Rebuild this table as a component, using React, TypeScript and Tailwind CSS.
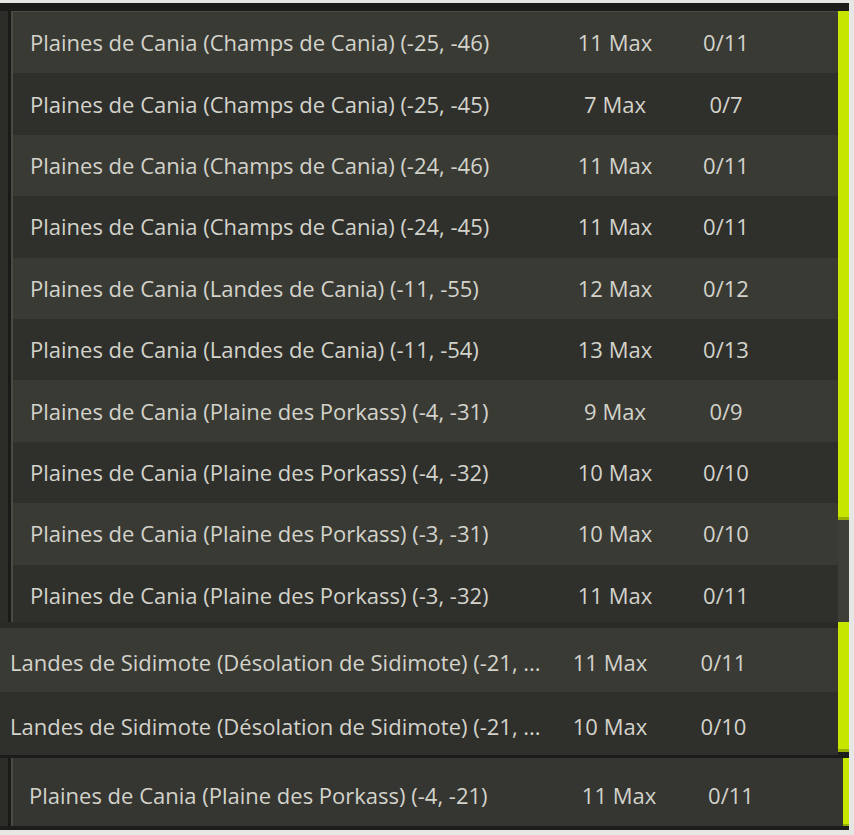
type Slot = { name: string; max: number };

const MAIN_ROWS: Slot[] = [
  { name: "Plaines de Cania (Champs de Cania) (-25, -46)", max: 11 },
  { name: "Plaines de Cania (Champs de Cania) (-25, -45)", max: 7 },
  { name: "Plaines de Cania (Champs de Cania) (-24, -46)", max: 11 },
  { name: "Plaines de Cania (Champs de Cania) (-24, -45)", max: 11 },
  { name: "Plaines de Cania (Landes de Cania) (-11, -55)", max: 12 },
  { name: "Plaines de Cania (Landes de Cania) (-11, -54)", max: 13 },
  { name: "Plaines de Cania (Plaine des Porkass) (-4, -31)", max: 9 },
  { name: "Plaines de Cania (Plaine des Porkass) (-4, -32)", max: 10 },
  { name: "Plaines de Cania (Plaine des Porkass) (-3, -31)", max: 10 },
  { name: "Plaines de Cania (Plaine des Porkass) (-3, -32)", max: 11 },
];

const SIDIMOTE_ROWS: Slot[] = [
  { name: "Landes de Sidimote (Désolation de Sidimote) (-21, ...", max: 11 },
  { name: "Landes de Sidimote (Désolation de Sidimote) (-21, ...", max: 10 },
];

function Gutter() {
  return (
    <div className="flex shrink-0">
      <div className="w-[8px] bg-[#2c2c28]" />
      <div className="w-[3px] bg-[#1a1a18]" />
      <div className="w-[2px] bg-[#4a4a43]" />
    </div>
  );
}

export default function App() {
  return (
    <div
      className="w-[854px] h-[835px] overflow-hidden bg-[#e6e6e4] text-[22px] text-[#d3d3cb]"
      style={{ fontFamily: '"Open Sans", "DejaVu Sans", sans-serif' }}
    >
      {/* main list */}
      <div className="mt-[3px] w-[849px] flex flex-col">
        <div className="h-[8px] bg-[#1c1c1a]" />
        <div className="flex h-[611px]">
          <Gutter />
          <div className="flex-1 flex flex-col overflow-hidden">
            <div className="h-px shrink-0 bg-[#4a4a44]" />
            {MAIN_ROWS.map((r, i) => (
              <div
                key={i}
                className={
                  "h-[61.4px] shrink-0 flex items-center " +
                  (i % 2 === 0 ? "bg-[#3a3a35]" : "bg-[#2f2f2b]")
                }
              >
                <div className="w-[540px] pl-[17px] whitespace-nowrap">{r.name}</div>
                <div className="w-[124px] text-center">{r.max} Max</div>
                <div className="w-[98px] text-center">0/{r.max}</div>
              </div>
            ))}
          </div>
          <div className="w-[11px] flex flex-col bg-[#3e3e39]">
            <div className="h-[506px] bg-[#c6e600]" />
            <div className="h-[3px] bg-[#98b000]" />
          </div>
        </div>
      </div>

      {/* Sidimote group */}
      <div className="w-[849px] flex h-[133px]">
        <div className="w-[838px] flex flex-col bg-[#2a2a26]">
          <div className="h-[6px]" />
          {SIDIMOTE_ROWS.map((r, i) => (
            <div
              key={i}
              className={
                "h-[63.5px] pt-[6px] flex items-center " +
                (i === 0 ? "bg-[#3a3a35]" : "bg-[#2f2f2b]")
              }
            >
              <div className="w-[548px] pl-[10px] whitespace-nowrap overflow-hidden">{r.name}</div>
              <div className="w-[124px] text-center">{r.max} Max</div>
              <div className="w-[103px] text-center">0/{r.max}</div>
            </div>
          ))}
        </div>
        <div className="w-[11px] flex flex-col bg-[#1c1c1a]">
          <div className="h-[127px] bg-[#c6e600]" />
          <div className="h-[3px] bg-[#98b000]" />
        </div>
      </div>

      {/* single row */}
      <div className="w-[849px] flex flex-col">
        <div className="h-[3px] bg-[#1c1c1a]" />
        <div className="flex h-[68px]">
          <Gutter />
          <div className="w-[830px] pt-[6px] flex items-center bg-[#353531]">
            <div className="w-[541px] pl-[16px] whitespace-nowrap">
              Plaines de Cania (Plaine des Porkass) (-4, -21)
            </div>
            <div className="w-[130px] text-center">11 Max</div>
            <div className="w-[94px] text-center">0/11</div>
          </div>
          <div className="w-[6px] flex flex-col bg-[#1c1c1a]">
            <div className="h-[66px] bg-[#c6e600]" />
            <div className="h-[2px] bg-[#98b000]" />
          </div>
        </div>
        <div className="h-[4px] bg-[#1c1c1a]" />
      </div>
    </div>
  );
}
